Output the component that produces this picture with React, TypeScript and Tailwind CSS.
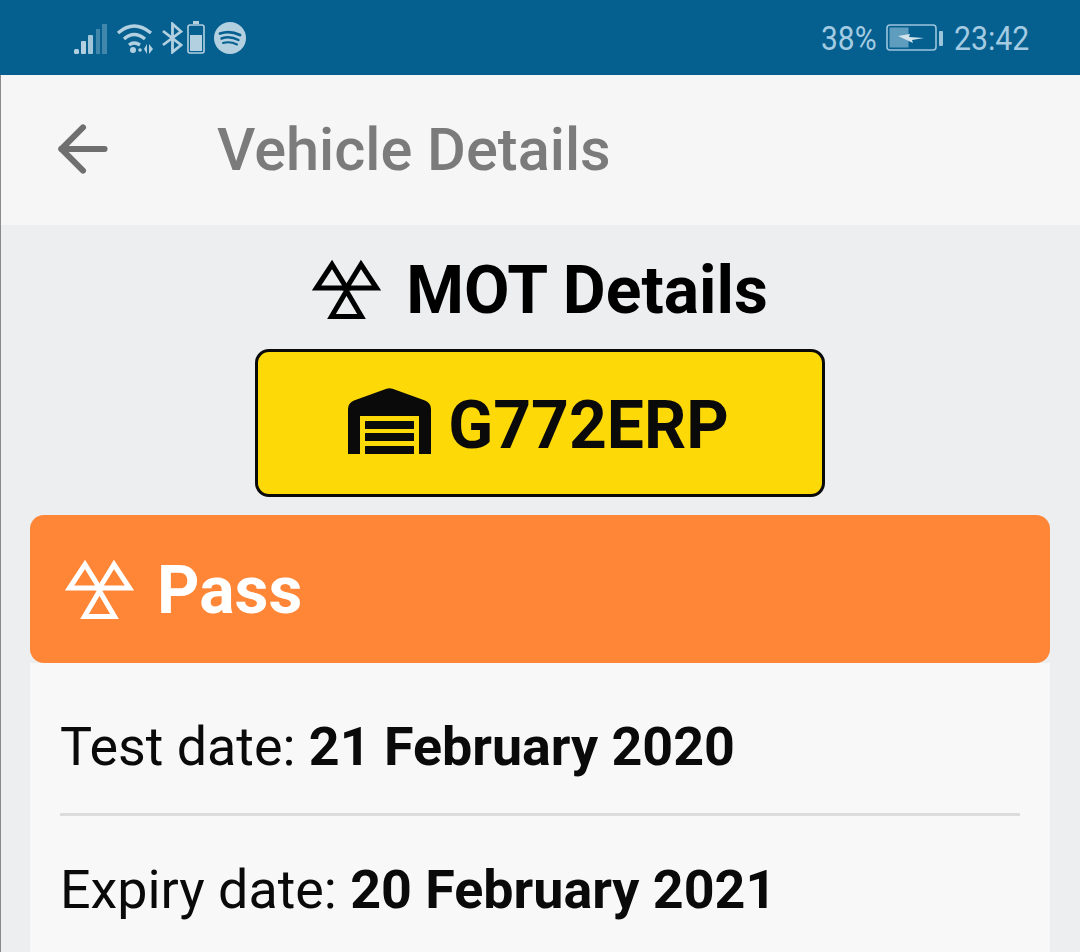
import { ArrowLeft } from "lucide-react";

// three-triangle MOT logo
function MotIcon({ className }: { className?: string }) {
  return (
    <svg viewBox="0 0 69 60" className={className} fill="none" stroke="currentColor" strokeWidth="5" strokeLinejoin="miter">
      <path d="M4.5 29 L20 5.5 L34.5 29 Z" />
      <path d="M34.5 29 L49 5.5 L64.5 29 Z" />
      <path d="M19.5 57.5 L34.5 32 L49.5 57.5 Z" />
    </svg>
  );
}

function GarageIcon({ className }: { className?: string }) {
  return (
    <svg viewBox="0 0 83 66" className={className} fill="currentColor">
      <path d="M38.5 0.8 Q41.5 -0.4 44.5 0.8 L77 12.5 Q83 15 83 21 L83 66 L71 66 L71 28 L12 28 L12 66 L0 66 L0 21 Q0 15 6 12.5 Z" />
      <rect x="17" y="33" width="49" height="8" rx="0.5" />
      <rect x="17" y="45" width="49" height="8" rx="0.5" />
      <rect x="17" y="58" width="49" height="8" rx="0.5" />
    </svg>
  );
}

function StatusLeft() {
  return (
    <div className="flex items-center text-[#b3d0e0]">
      <svg viewBox="0 0 34 30" className="w-[34px] h-[30px] mt-[2px]" fill="currentColor">
        <rect x="1" y="25" width="5" height="5" rx="1.5" />
        <rect x="8" y="17" width="5" height="13" rx="1" />
        <rect x="15" y="11" width="5" height="19" rx="1" opacity="0.9" />
        <rect x="23" y="5" width="4" height="25" opacity="0.35" />
        <rect x="29" y="0" width="5" height="30" opacity="0.35" />
      </svg>
      <svg viewBox="0 0 38 32" className="w-[38px] h-[32px] ml-[9px]" fill="none" stroke="currentColor" strokeWidth="3.4">
        <path d="M2 11 Q18 -3 35 11" />
        <path d="M8 17 Q18 8 29 17" />
        <path d="M13 23 Q18 19 24 23" />
        <circle cx="17" cy="28" r="3" fill="currentColor" stroke="none" />
        <circle cx="24" cy="28" r="1.8" fill="currentColor" stroke="none" />
        <path d="M31 22 L28 27 L31 32 Z M33 22 L37 27 L33 32 Z" fill="currentColor" stroke="none" />
      </svg>
      <svg viewBox="0 0 21 32" className="w-[21px] h-[32px] ml-[8px]" fill="none" stroke="currentColor" strokeWidth="2.8">
        <path d="M1 9 L19 23 L10.5 30 L10.5 2 L19 9.5 L1 23" />
      </svg>
      <svg viewBox="0 0 18 33" className="w-[18px] h-[33px] ml-[4px]" fill="currentColor">
        <rect x="6" y="0" width="6" height="3" />
        <rect x="1" y="4" width="16" height="28" rx="2" fill="none" stroke="currentColor" strokeWidth="1.6" />
        <rect x="3" y="14" width="12" height="16" />
      </svg>
      <svg viewBox="0 0 32 32" className="w-[32px] h-[32px] ml-[9px]">
        <circle cx="16" cy="16" r="16" fill="currentColor" />
        <g fill="none" stroke="#056090" strokeLinecap="round">
          <path d="M6 11.5 Q16 8 26 13" strokeWidth="2.8" />
          <path d="M7.5 16.5 Q16 13.5 24.5 18" strokeWidth="2.4" />
          <path d="M9 21 Q16 19 23 22.5" strokeWidth="2" />
        </g>
      </svg>
    </div>
  );
}

function ChargingBattery() {
  return (
    <svg viewBox="0 0 57 28" className="w-[57px] h-[28px]">
      <rect x="1" y="1" width="49" height="25" rx="3" fill="none" stroke="#9cc5dc" strokeWidth="1.6" />
      <rect x="3.5" y="3.5" width="19" height="20" fill="#5f9dbf" />
      <path d="M12 12 L24 10 L23 13 L38 14 L26 16 L27 19 Z" fill="#d3e3ec" />
      <rect x="53" y="7" width="4" height="15" rx="1" fill="#9cc5dc" />
    </svg>
  );
}

export default function App() {
  return (
    <div className="w-[1080px] h-[952px] overflow-hidden bg-[#edeef0] font-['Roboto',sans-serif]">
      {/* status bar */}
      <div className="h-[75px] bg-[#056090] flex items-center justify-between pl-[73px] pr-[51px]">
        <StatusLeft />
        <div className="flex items-center text-[34px] text-[#a4cbe2] leading-none">
          <span className="w-[54px] whitespace-nowrap origin-left scale-x-[0.88]">38%</span>
          <span className="ml-[11px] mr-[11px]">
            <ChargingBattery />
          </span>
          <span className="w-[75px] whitespace-nowrap origin-left scale-x-[0.89]">23:42</span>
        </div>
      </div>

      {/* header */}
      <div className="h-[150px] bg-[#f6f6f6] border-l border-[#8a8a8a] flex items-center pl-[45px]">
        <ArrowLeft className="w-[74px] h-[74px] text-[#6f6f6f] -mt-[2px]" strokeWidth={1.95} />
        <h1 className="ml-[97px] text-[59.5px] font-medium text-[#7b7b7b] leading-none mt-[2px]">Vehicle Details</h1>
      </div>

      <div className="border-l border-[#8a8a8a] pr-[30px] pl-[29px]">
        {/* title */}
        <div className="h-[124px] flex items-center justify-center text-black">
          <MotIcon className="w-[69px] h-[60px] mr-[25px] mt-[4px]" />
          <h2 className="text-[66px] font-bold leading-none mt-[8px]">MOT Details</h2>
        </div>

        {/* plate */}
        <div className="w-[570px] h-[148px] mx-auto pr-[3px] bg-[#fdd908] border-[3px] border-[#0a0a0a] rounded-[14px] flex items-center justify-center text-[#0a0a0a]">
          <GarageIcon className="w-[83px] h-[66px] mr-[17px] -mt-[5px]" />
          <span className="text-[66px] font-bold leading-none mt-[6px]">G772ERP</span>
        </div>

        {/* result card */}
        <div className="mt-[18px] h-[148px] bg-[#ff8636] rounded-[14px] flex items-center pl-[35px] text-white">
          <MotIcon className="w-[69px] h-[60px]" />
          <span className="ml-[23px] text-[66px] font-bold leading-none mt-[4px]">Pass</span>
        </div>
        <div className="bg-[#f8f8f8] px-[30px] text-[53.8px] text-[#0a0a0a] leading-none">
          <div className="h-[153px] flex items-center border-b-[3px] border-[#dcdcdc] pt-[18px]">
            <span>
              Test date: <b className="font-bold">21 February 2020</b>
            </span>
          </div>
          <div className="h-[150px] flex items-center pb-[2px]">
            <span>
              Expiry date: <b className="font-bold">20 February 2021</b>
            </span>
          </div>
        </div>
      </div>
    </div>
  );
}
